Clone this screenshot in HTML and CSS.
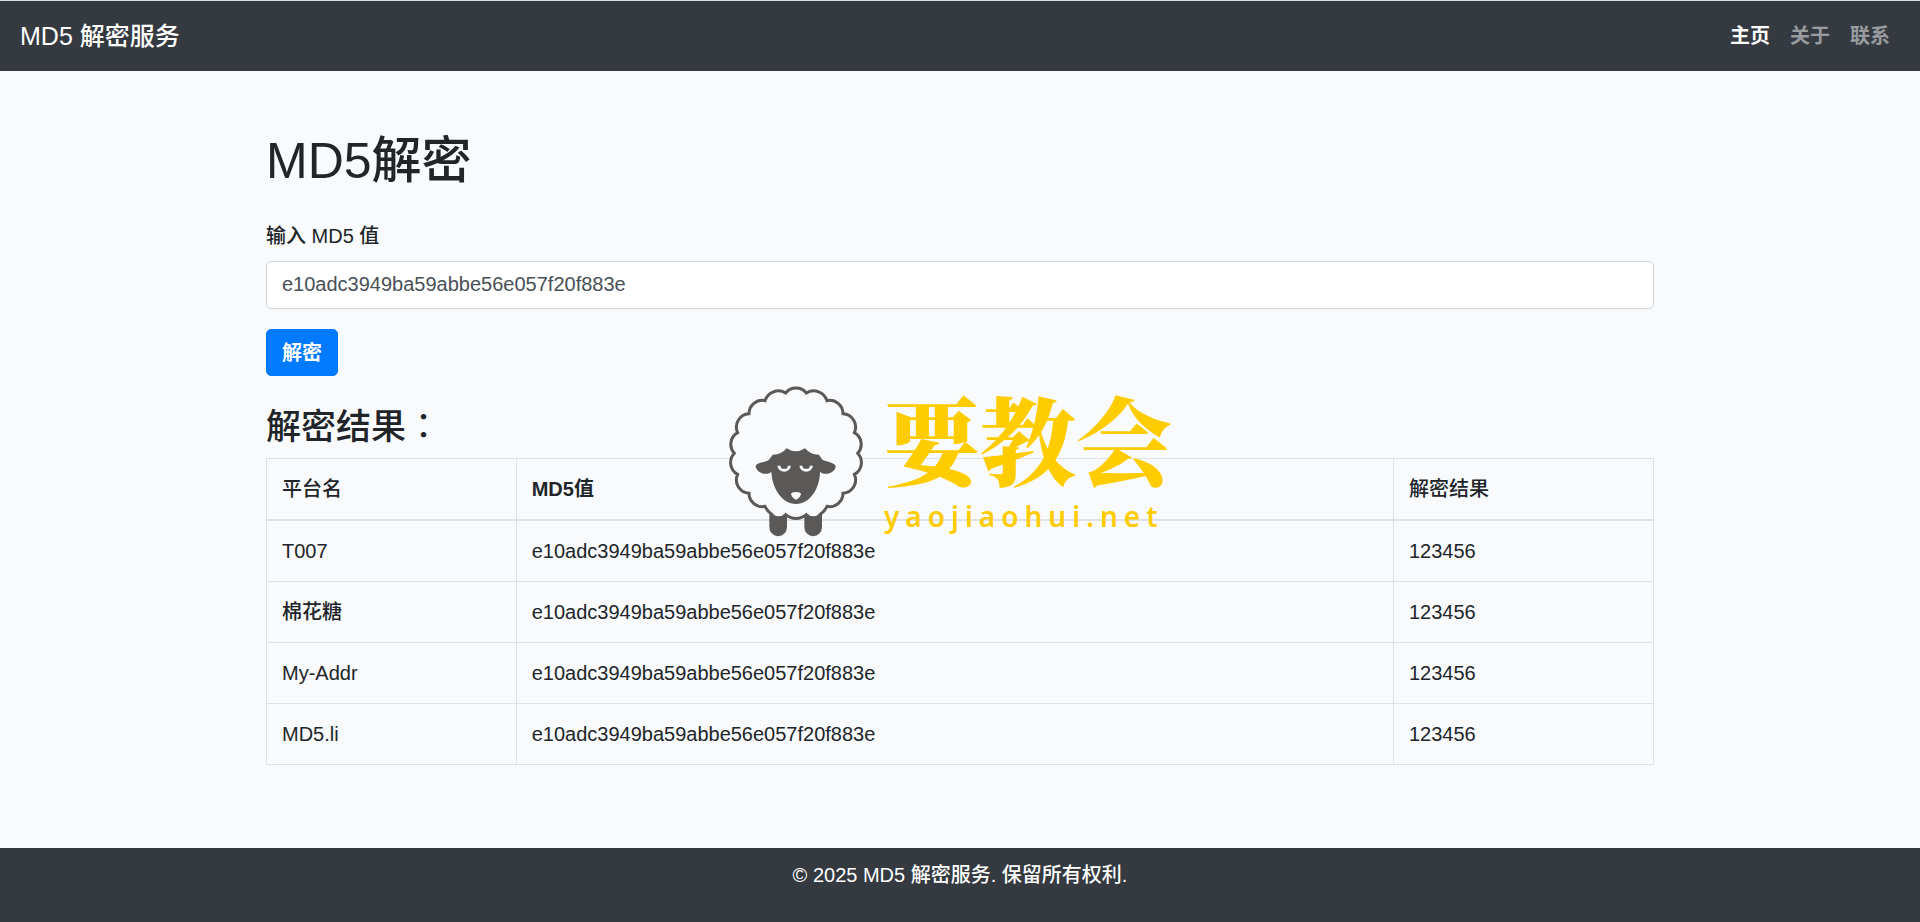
FILE: index.html
```html
<!DOCTYPE html>
<html lang="zh-CN">
<head>
    <meta charset="UTF-8">
    <meta name="viewport" content="width=device-width, initial-scale=1.0">
    <title>MD5 解密服务</title>
    <link rel="stylesheet" href="styles.css">
</head>
<body>
    <nav class="navbar">
        <a class="navbar-brand" href="#">MD5 解密服务</a>
        <ul class="navbar-nav">
            <li><a class="nav-link active" href="#">主页</a></li>
            <li><a class="nav-link" href="#about">关于</a></li>
            <li><a class="nav-link" href="#contact">联系</a></li>
        </ul>
    </nav>

    <main class="container">
        <h1>MD5解密</h1>
        <form>
            <div class="form-group">
                <label for="md5">输入 MD5 值</label>
                <input type="text" class="form-control" id="md5" name="md5" value="e10adc3949ba59abbe56e057f20f883e">
            </div>
            <button type="submit" class="btn">解密</button>
        </form>

        <h2>解密结果<span class="colon" lang="zh-TW">：</span></h2>
        <table class="table">
            <thead>
                <tr>
                    <th class="col-platform cjk">平台名</th>
                    <th>MD5值</th>
                    <th class="col-result cjk">解密结果</th>
                </tr>
            </thead>
            <tbody>
                <tr>
                    <td>T007</td>
                    <td>e10adc3949ba59abbe56e057f20f883e</td>
                    <td>123456</td>
                </tr>
                <tr>
                    <td>棉花糖</td>
                    <td>e10adc3949ba59abbe56e057f20f883e</td>
                    <td>123456</td>
                </tr>
                <tr>
                    <td>My-Addr</td>
                    <td>e10adc3949ba59abbe56e057f20f883e</td>
                    <td>123456</td>
                </tr>
                <tr>
                    <td>MD5.li</td>
                    <td>e10adc3949ba59abbe56e057f20f883e</td>
                    <td>123456</td>
                </tr>
            </tbody>
        </table>
    </main>

    <footer class="footer">
        <p>© 2025 MD5 解密服务. 保留所有权利.</p>
    </footer>

    <div class="watermark">
        <svg class="sheep" viewBox="54 44 408 456" aria-hidden="true">
            <!-- legs -->
            <path fill="#5b5858" d="M178 425H231V471A26.500 26.500 0 0 1 178 471ZM283 425H336V471A26.500 26.500 0 0 1 283 471Z"/>
            <!-- wool -->
            <path fill="#f8fafc" stroke="#5b5858" stroke-width="9" stroke-linejoin="miter" d="M227 68A40 40 0 0 1 289 68A42 42 0 0 1 351 91A40 40 0 0 1 399 130A40 40 0 0 1 433 187A40 40 0 0 1 443 249A40 40 0 0 1 433 312A40 40 0 0 1 399 369A40 40 0 0 1 351 408A60 60 0 0 1 331 432A27 27 0 0 1 289 433A48 48 0 0 1 227 433A27 27 0 0 1 185 432A60 60 0 0 1 165 408A40 40 0 0 1 117 369A40 40 0 0 1 83 312A40 40 0 0 1 73 249A40 40 0 0 1 83 187A40 40 0 0 1 117 130A40 40 0 0 1 165 91A42 42 0 0 1 227 68Z"/>
            <!-- head and ears -->
            <path fill="#5b5858" d="M230 234Q257 252 285 234Q302 254 327 253L337 268C350 275 377 276 377 289C375 306 347 318 330 305C329 355 300 401 258 401C216 401 187 355 184 305C168 318 140 306 137 289C138 276 165 277 177 268L188 253Q213 254 230 234Z"/>
            <!-- eyes and nose -->
            <path fill="none" stroke="#f8fafc" stroke-width="9" d="M207 286A15.500 14 0 0 0 238 286M273 286A15.500 14 0 0 0 304 286"/>
            <path fill="#f8fafc" d="M243 371Q244 365 258 365Q272 365 273 371Q270 383 258 388Q246 383 243 371Z"/>
        </svg>
        <div class="watermark-text">
            <span class="watermark-name">要教会</span>
            <span class="watermark-url">yaojiaohui.net</span>
        </div>
    </div>
</body>
</html>
```

FILE: styles.css
```css
* {
    box-sizing: border-box;
}
body {
    margin: 0;
    min-height: 100vh;
    display: flex;
    flex-direction: column;
    border-top: 1px solid #dee2e0;
    font-family: "Liberation Sans", Arial, "Noto Sans CJK SC", sans-serif;
    font-size: 20px;
    font-weight: 500;
    line-height: 30px;
    color: #212529;
    background-color: #f8fafc;
}
.navbar {
    display: flex;
    align-items: center;
    justify-content: space-between;
    padding: 10px 20px;
    background-color: #343a40;
}
.navbar-brand {
    color: #fff;
    font-size: 25px;
    text-decoration: none;
}
.navbar-nav {
    display: flex;
    margin: 0;
    padding: 0;
    list-style: none;
}
.nav-link {
    display: block;
    padding: 10px;
    font-weight: 700;
    color: rgba(255, 255, 255, 0.5);
    text-decoration: none;
}
.nav-link.active {
    color: #fff;
}
.container {
    flex: 1;
    width: 100%;
    max-width: 1424px;
    margin: 0 auto;
    padding: 60px 18px;
}
h1 {
    margin: 0 0 30px;
    font-size: 50px;
    font-weight: 500;
    line-height: 60px;
}
h2 {
    margin: 30px 0 10px;
    font-size: 35px;
    font-weight: 500;
    line-height: 42px;
}
.colon {
    font-family: "Noto Sans CJK TC", sans-serif;
    font-weight: 400;
    line-height: 1;
}
.form-group {
    margin-bottom: 20px;
}
.form-group label {
    display: block;
    margin-bottom: 10px;
}
.form-control {
    display: block;
    width: 100%;
    height: 48px;
    padding: 7px 15px 9px;
    border: 1px solid #ced4da;
    border-radius: 5px;
    font: inherit;
    color: #495057;
    background-color: #fff;
}
.btn {
    display: block;
    height: 47px;
    padding: 7px 15px;
    border: 1px solid #007bff;
    border-radius: 5px;
    font: inherit;
    font-weight: 700;
    color: #fff;
    background-color: #007bff;
    cursor: pointer;
}
.table {
    width: 100%;
    border-collapse: collapse;
}
.table th,
.table td {
    padding: 15px;
    border: 1px solid #dee2e6;
    text-align: left;
}
.table thead th {
    border-bottom-width: 2px;
}
.table .cjk {
    font-weight: 500;
}
.col-platform {
    width: 18%;
}
.col-result {
    width: 260px;
}
.footer {
    padding: 12px;
    text-align: center;
    color: #fff;
    background-color: #343a40;
}
.footer p {
    margin: 0 0 20px;
}

/* logo laid over the page */
.watermark {
    position: absolute;
    top: 385px;
    left: 50%;
    display: flex;
    gap: 20px;
    margin-left: -232px;
    pointer-events: none;
}
.sheep {
    width: 136px;
    height: 152px;
}
.watermark-text {
    display: flex;
    flex-direction: column;
    gap: 12px;
    color: #ffcc00;
}
.watermark-name {
    font-family: "Noto Serif CJK SC", "Noto Sans CJK SC", serif;
    font-size: 96px;
    font-weight: 900;
    line-height: 104px;
}
.watermark-url {
    font-family: "Noto Sans", sans-serif;
    font-size: 28px;
    font-weight: 600;
    letter-spacing: 6px;
}
```
